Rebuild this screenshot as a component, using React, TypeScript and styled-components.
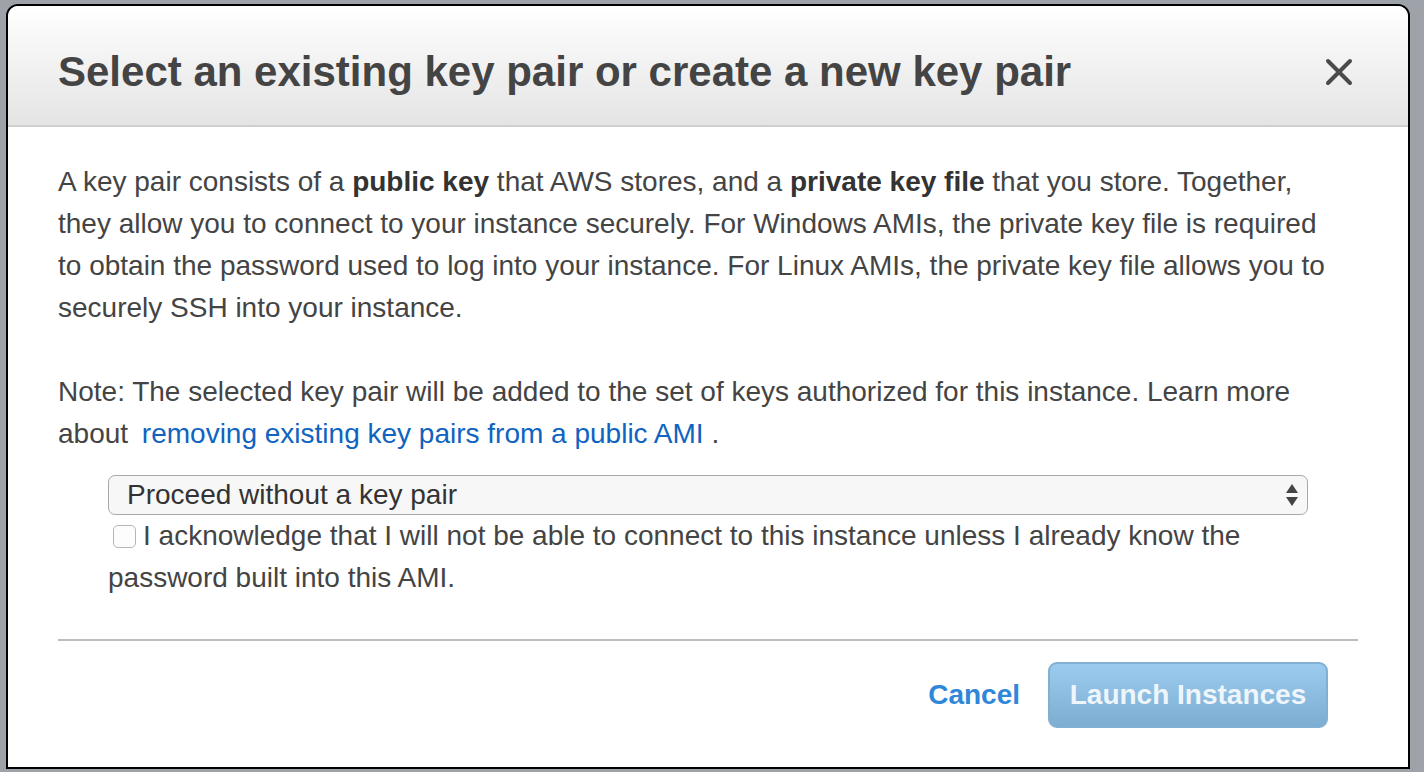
import styled, { createGlobalStyle } from 'styled-components';

const GlobalStyle = createGlobalStyle`
  html, body {
    margin: 0;
    padding: 0;
    background: #9ea2a9;
    font-family: "Liberation Sans", Arial, Helvetica, sans-serif;
  }
`;

export default function App() {
    return (
        <>
            <GlobalStyle />
            <Backdrop>
                <Modal>
                    <ModalHeader>
                        <ModalTitle>Select an existing key pair or create a new key pair</ModalTitle>
                        <CloseButton aria-label="Close">
                            <svg width="28" height="28" viewBox="0 0 28 28">
                                <path d="M3 3 L25 25 M25 3 L3 25" stroke="#4a4a4a" strokeWidth="4" strokeLinecap="round" />
                            </svg>
                        </CloseButton>
                    </ModalHeader>
                    <ModalBody>
                        <Paragraph $gap={42}>
                            A key pair consists of a <b>public key</b> that AWS stores, and a <b>private key file</b> that you store. Together,<br />
                            they allow you to connect to your instance securely. For Windows AMIs, the private key file is required<br />
                            to obtain the password used to log into your instance. For Linux AMIs, the private key file allows you to<br />
                            securely SSH into your instance.
                        </Paragraph>
                        <Paragraph $gap={20}>
                            Note: The selected key pair will be added to the set of keys authorized for this instance. Learn more<br />
                            about <LearnLink href="#">removing existing key pairs from a public AMI</LearnLink> .
                        </Paragraph>
                        <KeySection>
                            <SelectBox>
                                <span>Proceed without a key pair</span>
                                <svg width="14" height="26" viewBox="0 0 14 26">
                                    <path d="M7 2 L13 11 L1 11 Z" fill="#444" />
                                    <path d="M1 15 L13 15 L7 24 Z" fill="#444" />
                                </svg>
                            </SelectBox>
                            <AckLabel>
                                <CheckBox type="checkbox" />
                                I acknowledge that I will not be able to connect to this instance unless I already know the<br />
                                password built into this AMI.
                            </AckLabel>
                        </KeySection>
                        <Divider />
                        <Footer>
                            <CancelLink href="#">Cancel</CancelLink>
                            <LaunchButton disabled>Launch Instances</LaunchButton>
                        </Footer>
                    </ModalBody>
                </Modal>
            </Backdrop>
        </>
    )
}

const Backdrop = styled.div`
  width: 1424px;
  height: 772px;
  padding: 4px 14px 3px 6px;
  box-sizing: border-box;
  background: #9ea2a9;
`;

const Modal = styled.div`
  height: 100%;
  box-sizing: border-box;
  border: 2px solid #000;
  border-radius: 12px 12px 0 0;
  background: #fff;
  overflow: hidden;
  display: flex;
  flex-direction: column;
`;

const ModalHeader = styled.div`
  height: 121px;
  box-sizing: border-box;
  display: flex;
  align-items: center;
  justify-content: space-between;
  padding: 12px 55px 0 50px;
  background: linear-gradient(to bottom, #ffffff 0%, #e4e4e4 100%);
  border-bottom: 2px solid #cfcfcf;
`;

const ModalTitle = styled.h1`
  margin: 0;
  font-size: 42px;
  font-weight: bold;
  color: #444;
`;

const CloseButton = styled.button`
  background: none;
  border: none;
  padding: 0;
  display: flex;
  cursor: pointer;
`;

const ModalBody = styled.div`
  padding: 34px 50px 0 50px;
  color: #444;
  font-size: 28px;
  line-height: 42px;
`;

const Paragraph = styled.p<{ $gap: number }>`
  margin: 0 0 ${p => p.$gap}px 0;
  white-space: nowrap;
  b {
    color: #333;
  }
`;

const LearnLink = styled.a`
  color: #0f63c1;
  text-decoration: none;
  margin-left: 6px;
`;

const KeySection = styled.div`
  margin-left: 50px;
  width: 1200px;
`;

const SelectBox = styled.div`
  height: 40px;
  box-sizing: border-box;
  border: 1px solid #a9a9a9;
  border-radius: 7px;
  background: #f7f7f7;
  display: flex;
  align-items: center;
  justify-content: space-between;
  padding: 0 8px 0 18px;
  font-size: 28px;
  color: #333;
`;

const AckLabel = styled.label`
  display: block;
  white-space: nowrap;
  font-size: 28px;
  line-height: 42px;
  color: #444;
`;

const CheckBox = styled.input`
  appearance: none;
  width: 23px;
  height: 23px;
  margin: 0 7px 0 5px;
  vertical-align: -3px;
  border: 1px solid #b5b5b5;
  border-radius: 5px;
  background: #fdfdfd;
`;

const Divider = styled.hr`
  border: none;
  border-top: 2px solid #bcbcbc;
  margin: 40px 0 0 0;
`;

const Footer = styled.div`
  display: flex;
  justify-content: flex-end;
  align-items: center;
  gap: 28px;
  padding: 21px 30px 0 0;
`;

const CancelLink = styled.a`
  font-size: 28px;
  font-weight: bold;
  color: #2f87d9;
  text-decoration: none;
`;

const LaunchButton = styled.button`
  width: 280px;
  height: 66px;
  border: 2px solid #82b0d2;
  border-radius: 9px;
  background: linear-gradient(to bottom, #9ccbee 0%, #7daed2 100%);
  color: #eef6fc;
  font-family: "Liberation Sans", Arial, Helvetica, sans-serif;
  font-size: 28px;
  font-weight: bold;
  cursor: default;
`;
